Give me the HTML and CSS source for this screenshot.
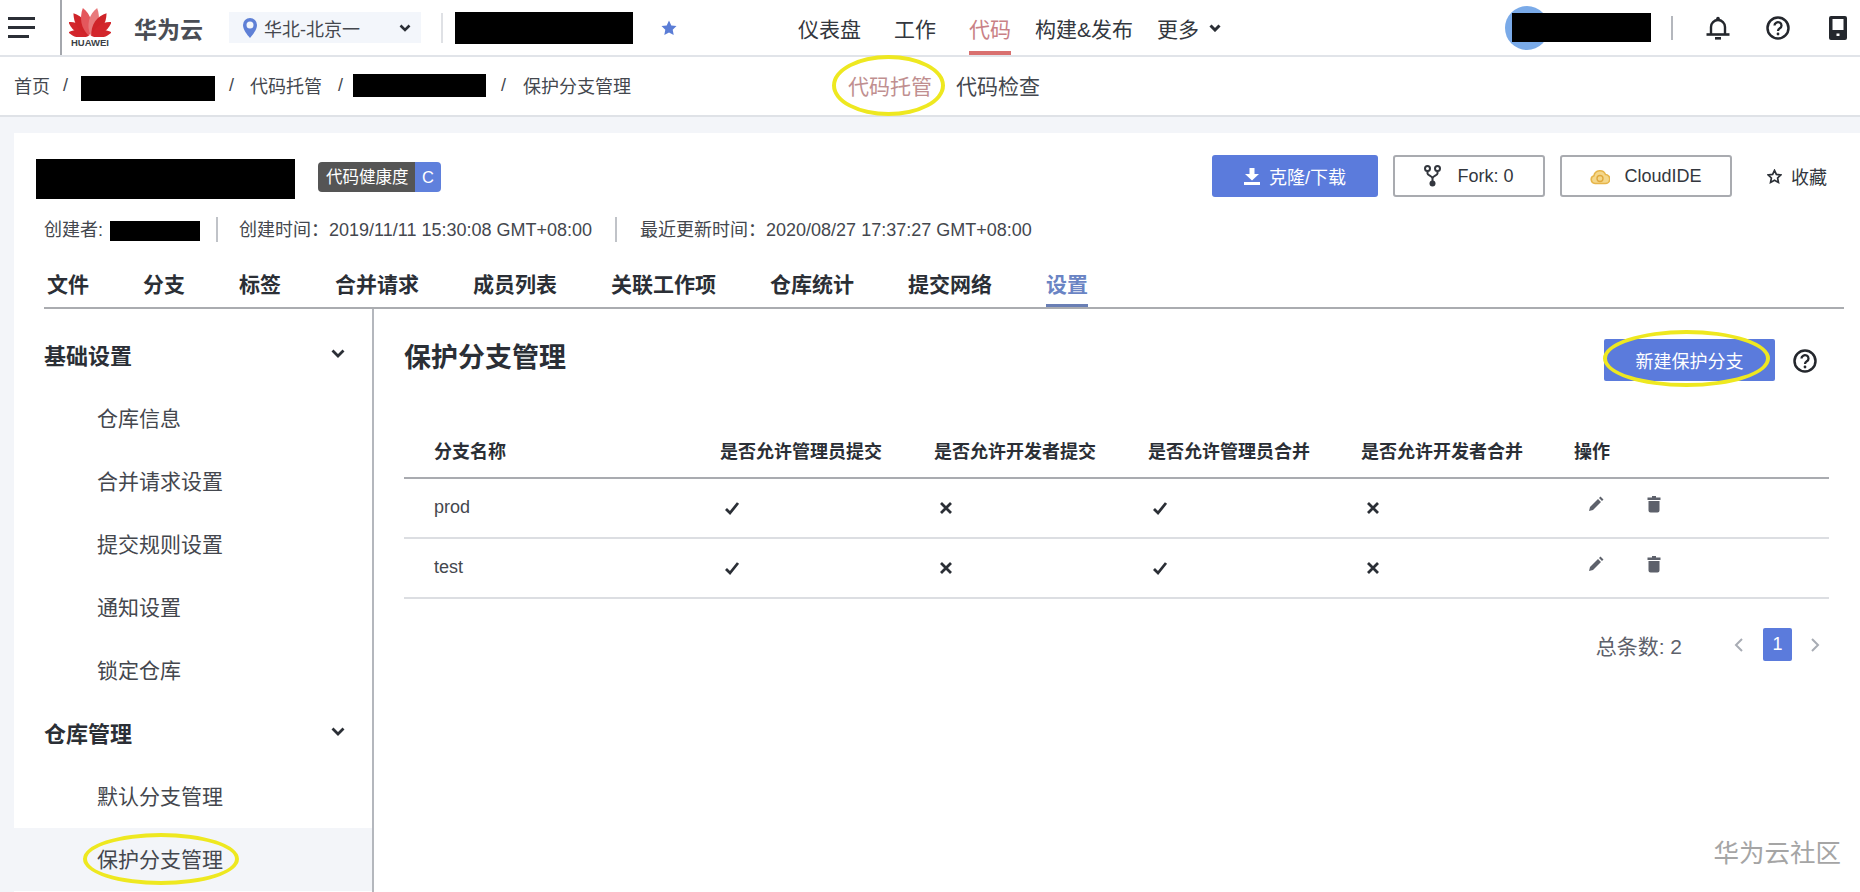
FILE: index.html
```html
<!DOCTYPE html>
<html lang="zh-CN">
<head>
<meta charset="utf-8">
<title>保护分支管理</title>
<link rel="stylesheet" href="styles.css">
</head>
<body>
<svg class="defs" width="0" height="0" aria-hidden="true">
  <defs>
    <path id="petal" d="M0 0C-6.5-8-7-17-2.5-26C4-20 6-9 0 0Z"/>
    <g id="i-check"><path d="M3 10l4 4 8-10" fill="none" stroke="#2b2f36" stroke-width="2.800"/></g>
    <g id="i-cross"><path d="M4 4l10 10M14 4L4 14" fill="none" stroke="#2b2f36" stroke-width="2.800"/></g>
    <g id="i-pencil"><path d="M2 16l1-4 8-8 3 3-8 8zM12 3l1.500-1.500 3 3L15 6z" fill="#5d616b"/></g>
    <g id="i-trash"><path d="M7 1h4v1.500h4.500V5h-13V2.500H7zM3.500 6h11v9.500a2 2 0 0 1-2 2h-7a2 2 0 0 1-2-2z" fill="#5d616b"/></g>
    <g id="i-help"><circle cx="12" cy="12" r="10.500" fill="none" stroke="#24272d" stroke-width="2.500"/><path d="M8.500 9.500a3.500 3.300 0 1 1 5.300 2.800c-1.200.8-1.800 1.300-1.800 2.700" fill="none" stroke="#24272d" stroke-width="2.300"/><circle cx="12" cy="18" r="1.400" fill="#24272d"/></g>
  </defs>
</svg>

<header class="topbar">
  <button class="menu" aria-label="菜单"><i></i><i></i><i class="short"></i></button>
  <span class="vline"></span>
  <div class="logo">
    <svg width="42" height="31" viewBox="-21 -32 42 33" aria-hidden="true">
      <use href="#petal" fill="#d3262c" transform="translate(-1.500 0) rotate(-74) scale(.84)"/>
      <use href="#petal" fill="#d3262c" transform="translate(-1.500 0) rotate(-50) scale(1)"/>
      <use href="#petal" fill="#cf2429" transform="translate(-1.500 0) rotate(-28) scale(1.120)"/>
      <use href="#petal" fill="#e4575c" transform="translate(-1 0) rotate(-7) scale(1.170)"/>
      <use href="#petal" fill="#e87a7c" transform="translate(1 0) rotate(7) scale(1.170) scale(-1 1)"/>
      <use href="#petal" fill="#cf2429" transform="translate(1.500 0) rotate(28) scale(1.120) scale(-1 1)"/>
      <use href="#petal" fill="#d3262c" transform="translate(1.500 0) rotate(50) scale(-1 1)"/>
      <use href="#petal" fill="#d3262c" transform="translate(1.500 0) rotate(74) scale(.84) scale(-1 1)"/>
    </svg>
    <span class="logo-word">HUAWEI</span>
  </div>
  <span class="brand">华为云</span>
  <div class="region">
    <svg class="pin" width="14" height="20" viewBox="0 0 14 20" aria-hidden="true"><path fill-rule="evenodd" d="M7 0a7 7 0 0 1 7 7c0 4.500-4 9.500-7 13C4 16.500 0 11.500 0 7a7 7 0 0 1 7-7zm0 3.500a3.500 3.500 0 1 0 0 7 3.500 3.500 0 0 0 0-7z" fill="#5f80d6"/></svg>
    <span class="region-name">华北-北京一</span>
    <svg class="chev" width="12" height="8" viewBox="0 0 12 8" aria-hidden="true"><path d="M1.500 1.500L6 6l4.500-4.500" fill="none" stroke="#2b2f36" stroke-width="2.600"/></svg>
  </div>
  <span class="sep-light"></span>
  <span class="redact r-project"></span>
  <svg class="fav" width="16" height="16" viewBox="0 0 16 16" aria-hidden="true"><path d="M8 .5l2.300 4.900 5.200.7-3.800 3.600 1 5.300L8 12.400 3.300 15l1-5.300L.5 6.100l5.200-.7z" fill="#5b7dd6"/></svg>
  <nav class="mainnav">
    <a class="nav-a">仪表盘</a>
    <a class="nav-a">工作</a>
    <a class="nav-a is-active">代码</a>
    <a class="nav-b">构建&amp;发布</a>
    <a class="nav-c">更多<svg width="12" height="8" viewBox="0 0 12 8" aria-hidden="true"><path d="M1.500 1.500L6 6l4.500-4.500" fill="none" stroke="#2b2f36" stroke-width="3"/></svg></a>
  </nav>
  <div class="usertools">
    <span class="avatar"></span>
    <span class="redact r-user"></span>
    <span class="sep-grey"></span>
    <svg class="tool-first" width="24" height="24" viewBox="0 0 24 24" aria-hidden="true"><circle cx="12" cy="2.500" r="1.800" fill="#24272d"/><path d="M5 18v-7a7 7 0 0 1 14 0v7" fill="none" stroke="#24272d" stroke-width="2.400"/><path d="M.5 18.500h23" stroke="#24272d" stroke-width="2.600"/><rect x="9" y="21" width="6" height="2.600" fill="#24272d"/></svg>
    <svg class="tool" width="24" height="24" viewBox="0 0 24 24" aria-hidden="true"><use href="#i-help"/></svg>
    <svg class="tool" width="24" height="24" viewBox="0 0 24 24" aria-hidden="true"><path fill-rule="evenodd" d="M5 0h14a2 2 0 0 1 2 2v20a2 2 0 0 1-2 2H5a2 2 0 0 1-2-2V2a2 2 0 0 1 2-2zm1.500 3v11h11V3zM10.500 17.500v2.500h3v-2.500z" fill="#24272d"/></svg>
  </div>
</header>

<div class="subbar">
  <span>首页</span>
  <span class="sep s1">/</span>
  <span class="redact r-crumb1"></span>
  <span class="sep s2">/</span>
  <span>代码托管</span>
  <span class="sep s3">/</span>
  <span class="redact r-crumb2"></span>
  <span class="sep s4">/</span>
  <span>保护分支管理</span>
  <nav class="subnav">
    <a class="subnav-active">代码托管<span class="ring ring-subnav"></span></a>
    <a class="subnav-item">代码检查</a>
  </nav>
</div>

<main class="page">
  <section class="card">
    <div class="repo-head">
      <span class="redact r-repo"></span>
      <span class="health"><span class="health-label">代码健康度</span><span class="health-grade">C</span></span>
      <div class="repo-actions">
        <button class="btn btn-primary btn-clone">
          <svg width="16" height="17" viewBox="0 0 16 17" aria-hidden="true"><path d="M5.500 0h5v6H15L8 12.500 1 6h4.500z M0 14h16v3H0z" fill="#fff"/></svg>克隆/下载
        </button>
        <button class="btn btn-line btn-fork">
          <svg width="17" height="22" viewBox="0 0 17 22" aria-hidden="true"><g fill="none" stroke="#33373e" stroke-width="2"><circle cx="3.500" cy="3.500" r="2.500"/><circle cx="13.500" cy="3.500" r="2.500"/><path d="M3.500 6v2.500c0 2 5 2.500 5 5M13.500 6v2.500c0 2-5 2.500-5 5V17"/></g><circle cx="8.500" cy="18.500" r="3" fill="#33373e"/></svg>Fork: 0
        </button>
        <button class="btn btn-line btn-ide">
          <svg width="20" height="20" viewBox="0 0 20 20" aria-hidden="true"><path d="M5 17.500a4 4 0 0 1-1-7.800A6 6 0 0 1 15.500 8.500 4.500 4.500 0 0 1 15 17.500z" fill="#f4d78a" stroke="#e6b54a" stroke-width="1.600"/><circle cx="10" cy="12.500" r="3" fill="none" stroke="#e0a93d" stroke-width="1.400"/></svg>CloudIDE
        </button>
        <span class="collect">
          <svg width="15" height="15" viewBox="0 0 16 16" aria-hidden="true"><path d="M8 1.500l2 4.300 4.700.6-3.400 3.200.9 4.700L8 12l-4.200 2.300.9-4.700L1.300 6.400 6 5.800z" fill="none" stroke="#2b2f36" stroke-width="1.800"/></svg>收藏
        </span>
      </div>
    </div>

    <div class="repo-meta">
      <span>创建者:</span>
      <span class="redact r-owner"></span>
      <span class="meta-sep"></span>
      <span>创建时间：2019/11/11 15:30:08 GMT+08:00</span>
      <span class="meta-sep meta-sep-last"></span>
      <span>最近更新时间：2020/08/27 17:37:27 GMT+08:00</span>
    </div>

    <nav class="tabs">
      <a class="tab">文件</a>
      <a class="tab">分支</a>
      <a class="tab">标签</a>
      <a class="tab">合并请求</a>
      <a class="tab">成员列表</a>
      <a class="tab">关联工作项</a>
      <a class="tab">仓库统计</a>
      <a class="tab">提交网络</a>
      <a class="tab is-active">设置</a>
    </nav>

    <div class="settings">
      <aside class="sidebar">
        <div class="side-title">基础设置<svg width="14" height="9" viewBox="0 0 14 9" aria-hidden="true"><path d="M1.500 1.500L7 7l5.500-5.500" fill="none" stroke="#2b2f36" stroke-width="2.800"/></svg></div>
        <a class="side-item">仓库信息</a>
        <a class="side-item">合并请求设置</a>
        <a class="side-item">提交规则设置</a>
        <a class="side-item">通知设置</a>
        <a class="side-item">锁定仓库</a>
        <div class="side-title">仓库管理<svg width="14" height="9" viewBox="0 0 14 9" aria-hidden="true"><path d="M1.500 1.500L7 7l5.500-5.500" fill="none" stroke="#2b2f36" stroke-width="2.800"/></svg></div>
        <a class="side-item">默认分支管理</a>
        <a class="side-item is-active">保护分支管理<span class="ring ring-side"></span></a>
      </aside>

      <div class="content">
        <div class="content-head">
          <h1 class="content-title">保护分支管理</h1>
          <button class="btn btn-primary btn-new">新建保护分支<span class="ring ring-btn"></span></button>
          <svg class="head-help" width="24" height="24" viewBox="0 0 24 24" aria-hidden="true"><use href="#i-help"/></svg>
        </div>

        <table class="rules">
          <thead>
            <tr>
              <th>分支名称</th>
              <th>是否允许管理员提交</th>
              <th>是否允许开发者提交</th>
              <th>是否允许管理员合并</th>
              <th>是否允许开发者合并</th>
              <th>操作</th>
            </tr>
          </thead>
          <tbody>
            <tr>
              <td>prod</td>
              <td><svg class="flag" width="18" height="18" viewBox="0 0 18 18" aria-label="是"><use href="#i-check"/></svg></td>
              <td><svg class="flag" width="18" height="18" viewBox="0 0 18 18" aria-label="否"><use href="#i-cross"/></svg></td>
              <td><svg class="flag" width="18" height="18" viewBox="0 0 18 18" aria-label="是"><use href="#i-check"/></svg></td>
              <td><svg class="flag" width="18" height="18" viewBox="0 0 18 18" aria-label="否"><use href="#i-cross"/></svg></td>
              <td class="ops"><svg width="18" height="18" viewBox="0 0 18 18" aria-label="编辑"><use href="#i-pencil"/></svg><svg width="18" height="18" viewBox="0 0 18 18" aria-label="删除"><use href="#i-trash"/></svg></td>
            </tr>
            <tr>
              <td>test</td>
              <td><svg class="flag" width="18" height="18" viewBox="0 0 18 18" aria-label="是"><use href="#i-check"/></svg></td>
              <td><svg class="flag" width="18" height="18" viewBox="0 0 18 18" aria-label="否"><use href="#i-cross"/></svg></td>
              <td><svg class="flag" width="18" height="18" viewBox="0 0 18 18" aria-label="是"><use href="#i-check"/></svg></td>
              <td><svg class="flag" width="18" height="18" viewBox="0 0 18 18" aria-label="否"><use href="#i-cross"/></svg></td>
              <td class="ops"><svg width="18" height="18" viewBox="0 0 18 18" aria-label="编辑"><use href="#i-pencil"/></svg><svg width="18" height="18" viewBox="0 0 18 18" aria-label="删除"><use href="#i-trash"/></svg></td>
            </tr>
          </tbody>
        </table>

        <div class="pager">
          <span class="pager-total">总条数: 2</span>
          <svg class="pager-prev" width="20" height="18" viewBox="0 0 20 18" aria-hidden="true"><path d="M13 3L7 9l6 6" fill="none" stroke="#a8acb4" stroke-width="2"/></svg>
          <span class="pager-page">1</span>
          <svg class="pager-next" width="20" height="18" viewBox="0 0 20 18" aria-hidden="true"><path d="M7 3l6 6-6 6" fill="none" stroke="#a8acb4" stroke-width="2"/></svg>
        </div>
      </div>
    </div>
  </section>
</main>

<div class="watermark">华为云社区</div>
</body>
</html>
```

FILE: styles.css
```css
* { box-sizing: border-box; }

html, body { margin: 0; height: 892px; overflow: hidden; }

body {
  position: relative;
  width: 1860px;
  background: #f3f5f9;
  color: #33373e;
  font-family: "Liberation Sans", "Noto Sans CJK SC", sans-serif;
  font-size: 18px;
}

.defs { position: absolute; }

.redact { display: block; flex: none; background: #000; }

/* 标注圈 */
.ring {
  position: absolute;
  border: 4px solid #eee820;
  border-radius: 50%;
  pointer-events: none;
}

/* 顶栏 */
.topbar {
  display: flex;
  align-items: center;
  height: 57px;
  background: #fff;
  border-bottom: 2px solid #e1e4e9;
}

.menu {
  display: flex;
  flex-direction: column;
  gap: 6px;
  width: 27px;
  margin-left: 8px;
  padding: 0;
  border: 0;
  background: none;
}
.menu i { display: block; height: 3px; background: #2b2f36; }
.menu .short { width: 21px; }

.vline { align-self: stretch; width: 2px; margin-left: 25px; background: #a4a7ad; }

.logo {
  display: flex;
  flex-direction: column;
  align-items: center;
  width: 42px;
  margin: 0 0 2px 7px;
}
.logo-word {
  margin-top: 1px;
  color: #3c3f46;
  font-size: 9.500px;
  line-height: 9px;
  font-weight: 700;
}

.brand {
  width: 69px;
  margin-left: 23px;
  color: #4a4d54;
  font-size: 23px;
  font-weight: 700;
}

.region {
  display: flex;
  align-items: center;
  width: 192px;
  height: 31px;
  margin-left: 26px;
  padding: 0 10px 0 14px;
  background: #f3f6fb;
}
.region-name { margin-left: 7px; color: #44474e; }
.region .chev { margin-left: auto; }

.sep-light { width: 2px; height: 30px; margin-left: 20px; background: #dfe1e5; }
.r-project { width: 178px; height: 32px; margin-left: 12px; }
.fav { margin-left: 28px; flex: none; }

.mainnav { display: flex; align-items: center; margin-left: 121px; font-size: 21px; }
.mainnav a { position: relative; display: flex; align-items: center; height: 55px; }
.nav-a { margin-right: 33px; }
.nav-b { margin: 0 24px 0 -9px; }
.nav-c svg { margin-left: 10px; }
.mainnav .is-active { color: #c98186; }
.mainnav .is-active::after {
  content: "";
  position: absolute;
  left: 0;
  right: 0;
  bottom: 0;
  height: 4px;
  background: #d9706f;
}

.usertools { display: flex; align-items: center; margin-left: auto; padding-right: 10px; }
.avatar { flex: none; width: 44px; height: 44px; border-radius: 50%; background: #7aaae8; }
.r-user { width: 139px; height: 29px; margin-left: -37px; z-index: 1; }
.sep-grey { width: 2px; height: 24px; margin-left: 20px; background: #b4b7bd; }
.tool-first { margin-left: 33px; }
.tool { margin-left: 36px; }

/* 面包屑 */
.subbar {
  display: flex;
  align-items: center;
  height: 60px;
  padding: 0 0 2px 14px;
  background: #fff;
  border-bottom: 2px solid #dfe2e7;
  color: #44474e;
}
.sep { width: 5px; font-weight: 300; }
.s1 { margin: 0 13px; }
.s2 { margin: 0 16px 0 14px; }
.s3 { margin: 0 10px 0 16px; }
.s4 { margin: 0 17px 0 15px; }
.r-crumb1 { align-self: flex-start; width: 134px; height: 25px; margin-top: 19px; }
.r-crumb2 { align-self: flex-start; width: 133px; height: 23px; margin-top: 17px; }

.subnav { display: flex; margin-left: 217px; font-size: 21px; }
.subnav-active { position: relative; color: #c08f90; }
.subnav-item { margin-left: 24px; }
.ring-subnav { left: -16px; right: -13px; top: -15px; bottom: -16px; }

/* 主体卡片 */
.page { height: 775px; padding: 16px 0 0 14px; }

.card {
  height: 759px;
  padding: 22px 16px 0 30px;
  background: #fff;
}

.repo-head { display: flex; align-items: flex-start; height: 42px; }
.r-repo { width: 259px; height: 40px; margin: 4px 0 0 -8px; }

.health {
  display: flex;
  height: 30px;
  margin: 7px 0 0 23px;
  border-radius: 4px;
  overflow: hidden;
  color: #fff;
  font-size: 16.500px;
  line-height: 30px;
}
.health-label { width: 97px; padding-left: 8px; background: #555; white-space: nowrap; }
.health-grade { width: 26px; text-align: center; background: #5f80dc; }

.repo-actions { display: flex; align-items: center; margin-left: auto; margin-right: 17px; }

.btn {
  display: flex;
  align-items: center;
  justify-content: center;
  height: 42px;
  padding: 0;
  border-radius: 3px;
  font: inherit;
}
.btn-primary { border: 0; background: #5b7bdc; color: #fff; }
.btn-line { border: 2px solid #a9abb0; background: #fff; color: #33373e; }
.btn-clone { width: 166px; gap: 9px; }
.btn-fork { width: 152px; gap: 16px; margin-left: 15px; }
.btn-ide { width: 172px; gap: 14px; margin-left: 15px; }
.collect { display: flex; align-items: center; gap: 9px; margin-left: 35px; }

.repo-meta { display: flex; align-items: center; height: 25px; margin-top: 18px; color: #44474e; }
.r-owner { align-self: flex-start; width: 90px; height: 20px; margin: 6px 0 0 7px; }
.meta-sep { align-self: flex-start; width: 2px; height: 25px; margin: 2px 21px 0 16px; background: #c0c3c8; }
.meta-sep-last { margin: 2px 23px 0 23px; }

.tabs {
  display: flex;
  gap: 54px;
  height: 51px;
  margin-top: 18px;
  padding-left: 3px;
  border-bottom: 2px solid #aaacb0;
  font-size: 21px;
  font-weight: 700;
}
.tab { display: block; height: 49px; padding-top: 10px; color: #2b2f36; border-bottom: 3px solid transparent; }
.tab.is-active { color: #6a84c4; border-bottom-color: #6a7fb5; }

.settings { display: flex; height: 583px; }

/* 侧栏 */
.sidebar {
  flex: none;
  width: 360px;
  margin-left: -30px;
  padding-top: 15px;
  border-right: 2px solid #b4b7bd;
}
.side-title {
  display: flex;
  align-items: center;
  justify-content: space-between;
  height: 63px;
  padding: 0 27px 4px 30px;
  color: #2b2f36;
  font-size: 22px;
  font-weight: 700;
}
.side-item {
  position: relative;
  display: flex;
  align-items: center;
  height: 63px;
  padding: 0 0 4px 83px;
  color: #44474e;
  font-size: 21px;
}
.side-item.is-active { background: #f3f5f9; }
.ring-side { left: 69px; width: 156px; top: 5px; bottom: 6px; }

/* 内容 */
.content { flex: 1; padding: 30px 15px 0 30px; }

.content-head { display: flex; align-items: center; height: 42px; }
.content-title { margin: 0 auto 9px 0; color: #2b2f36; font-size: 27px; font-weight: 700; }
.btn-new { position: relative; width: 171px; border-radius: 2px; }
.ring-btn { left: -1px; right: 5px; top: -9px; bottom: -6px; }
.head-help { margin: 2px 12px 0 18px; }

.rules {
  width: 1425px;
  margin-top: 42px;
  border-collapse: separate;
  border-spacing: 0;
  table-layout: fixed;
}
.rules th:nth-child(1) { width: 316px; }
.rules th:nth-child(2), .rules th:nth-child(3) { width: 214px; }
.rules th:nth-child(4), .rules th:nth-child(5) { width: 213px; }
.rules th {
  height: 56px;
  padding: 0;
  border-bottom: 2px solid #a9abb0;
  color: #2b2f36;
  font-weight: 700;
  text-align: left;
}
.rules td { height: 60px; padding: 0 0 1px; border-bottom: 2px solid #dcdee2; color: #44474e; }
.rules th:first-child, .rules td:first-child { padding-left: 30px; }
.flag { display: block; margin-left: 3px; }
.ops svg { margin: 0 0 8px 13px; vertical-align: middle; }
.ops svg + svg { margin-left: 40px; }

.pager { display: flex; align-items: center; justify-content: flex-end; height: 33px; margin-top: 29px; padding-right: 4px; }
.pager-total { margin-right: 47px; color: #5d616b; font-size: 21px; }
.pager-page {
  width: 29px;
  height: 33px;
  margin: 0 13px 0 14px;
  border-radius: 2px;
  background: #5b7bdc;
  color: #fff;
  font-size: 18px;
  line-height: 33px;
  text-align: center;
}

.watermark {
  position: absolute;
  right: 19px;
  bottom: 21px;
  color: #a5a5a5;
  font-size: 25.500px;
  line-height: 36px;
}
```
